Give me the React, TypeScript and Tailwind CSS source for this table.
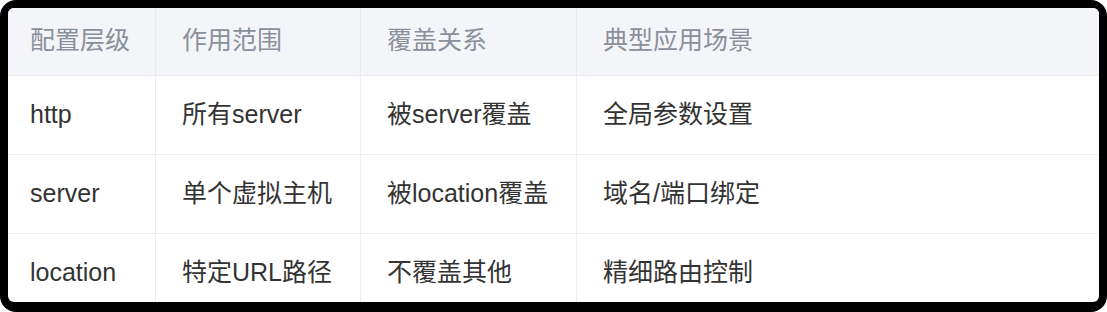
import React from 'react';

const headers = ['配置层级', '作用范围', '覆盖关系', '典型应用场景'];

const rows = [
  ['http', '所有server', '被server覆盖', '全局参数设置'],
  ['server', '单个虚拟主机', '被location覆盖', '域名/端口绑定'],
  ['location', '特定URL路径', '不覆盖其他', '精细路由控制'],
];

const cols = 'grid grid-cols-[148px_205px_216px_1fr]';

const cellPad = (i: number) => (i === 0 ? 'pl-[22px]' : 'pl-[26px]');

export default function App() {
  return (
    <div
      className="w-[1107px] h-[312px] bg-white"
      style={{ fontFamily: '"Liberation Sans", "Noto Sans CJK SC", sans-serif' }}
    >
      <div className="w-full h-full rounded-[16px] bg-black pt-[8px] pl-[8px] pr-[8px] pb-[10px]">
        <div className="w-full h-full rounded-[6px] bg-white overflow-hidden">
          <div className={`${cols} h-[68px] bg-[#f4f5f9] border-b border-[#e9ebef]`}>
            {headers.map((h, i) => (
              <div
                key={h}
                className={`flex items-center pb-[2px] text-[25px] text-[#8b8f99] ${cellPad(i)} ${i < 3 ? 'border-r border-[#e9ebef]' : ''}`}
              >
                {h}
              </div>
            ))}
          </div>
          {rows.map((r, ri) => (
            <div key={ri} className={`${cols} h-[79px] border-b border-[#eceef1]`}>
              {r.map((c, i) => (
                <div
                  key={i}
                  className={`flex items-center text-[25px] text-[#333333] ${cellPad(i)} ${i < 3 ? 'border-r border-[#eceef1]' : ''}`}
                >
                  {c}
                </div>
              ))}
            </div>
          ))}
        </div>
      </div>
    </div>
  );
}
